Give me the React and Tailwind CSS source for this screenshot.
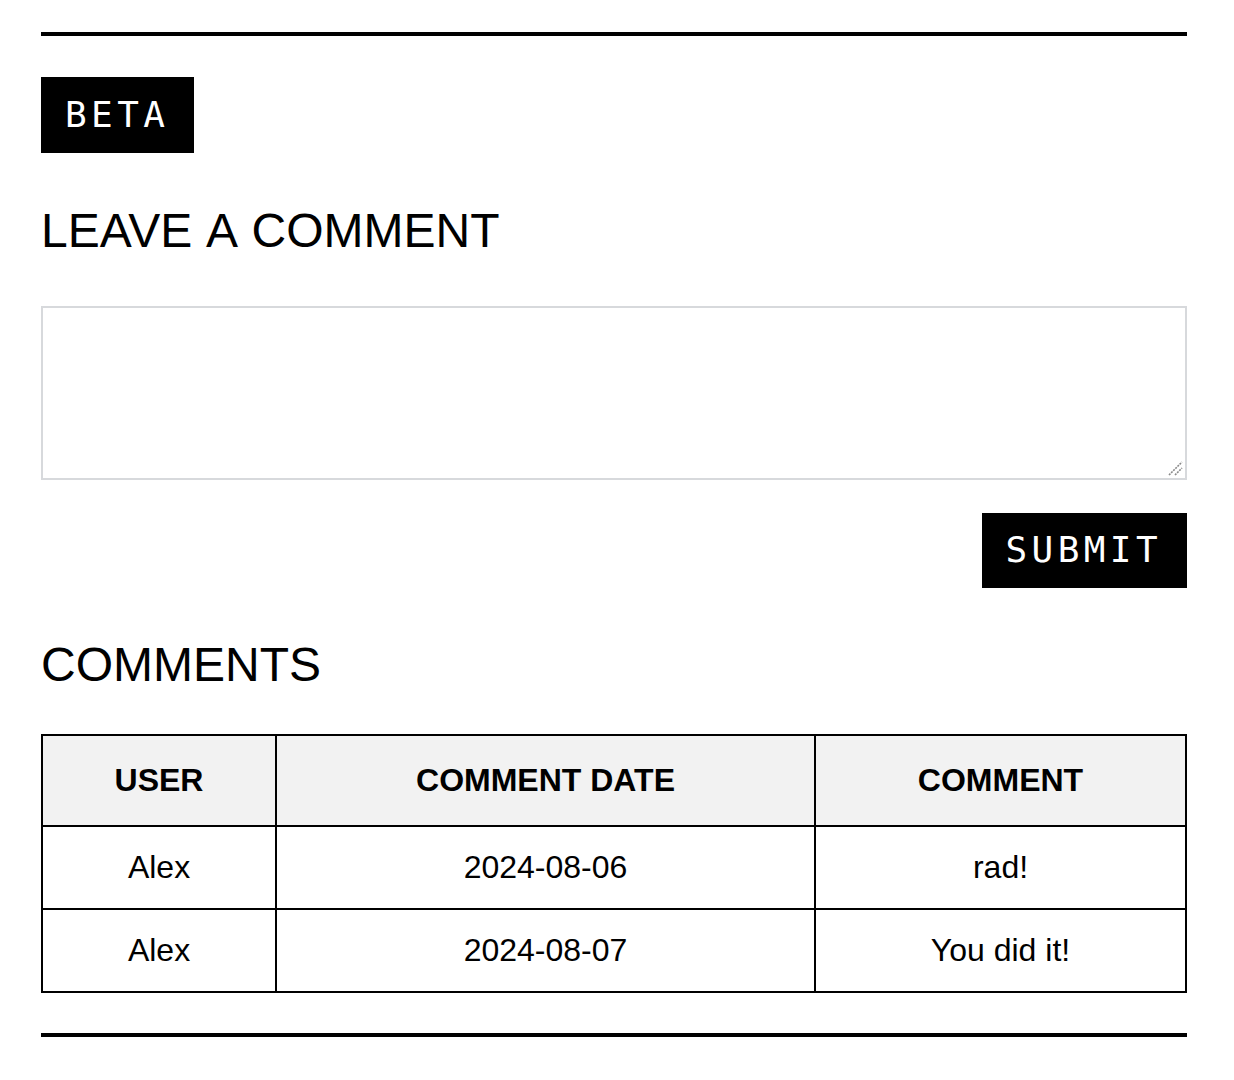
import { useState } from 'react'

const comments = [
  { user: 'Alex', date: '2024-08-06', text: 'rad!' },
  { user: 'Alex', date: '2024-08-07', text: 'You did it!' }
]

export default function App() {
  const [value, setValue] = useState('')

  return (
    <div className="bg-white min-h-[1080px] pt-[32px] font-['Liberation_Sans',Arial,sans-serif] text-black">
      <div className="ml-[41px] w-[1146px]">
        <div className="h-[4px] bg-black" />

        {/* Badge */}
        <div className="mt-[41px] flex">
          <span className="h-[76px] flex items-center pl-6 pr-[25px] bg-black text-white font-['DejaVu_Sans_Mono',monospace] text-[36px] leading-none tracking-[4.4px]">
            BETA
          </span>
        </div>

        <h2 className="mt-[49px] text-[48px] leading-[1.2] font-normal [word-spacing:3px]">LEAVE A COMMENT</h2>

        <div className="relative mt-[46px]">
          <textarea
            value={value}
            onChange={e => setValue(e.target.value)}
            className="block w-full h-[174px] border-2 border-[#d7d9dc] bg-white outline-none p-2 text-[20px] resize-none"
          />
          <svg className="absolute right-[4px] bottom-[4px] w-[15px] h-[15px]" viewBox="0 0 15 15">
            <path d="M1 14 L14 1 M7 14 L14 7" stroke="#8a8a8a" strokeWidth="1.6" strokeDasharray="2 1" fill="none" />
          </svg>
        </div>

        <div className="mt-[33px] flex justify-end">
          <button className="h-[75px] flex items-center pl-6 pr-[25px] bg-black text-white font-['DejaVu_Sans_Mono',monospace] text-[36px] leading-none tracking-[4.4px]">
            SUBMIT
          </button>
        </div>

        <h2 className="mt-[48px] text-[48px] leading-[1.2] font-normal">COMMENTS</h2>

        {/* Comments table */}
        <table className="mt-[41px] w-full border-collapse border-2 border-black text-[32px] leading-[37px] text-center">
          <thead>
            <tr className="bg-[#f2f2f2]">
              <th className="w-[234px] border-2 border-black py-[26px] font-bold">USER</th>
              <th className="w-[539px] border-2 border-black py-[26px] font-bold">COMMENT DATE</th>
              <th className="border-2 border-black py-[26px] font-bold">COMMENT</th>
            </tr>
          </thead>
          <tbody>
            {comments.map((c, i) => (
              <tr key={i}>
                <td className="border-2 border-black py-[22px]">{c.user}</td>
                <td className="border-2 border-black py-[22px]">{c.date}</td>
                <td className="border-2 border-black py-[22px]">{c.text}</td>
              </tr>
            ))}
          </tbody>
        </table>

        <div className="mt-[40px] h-[4px] bg-black" />
      </div>
    </div>
  )
}
